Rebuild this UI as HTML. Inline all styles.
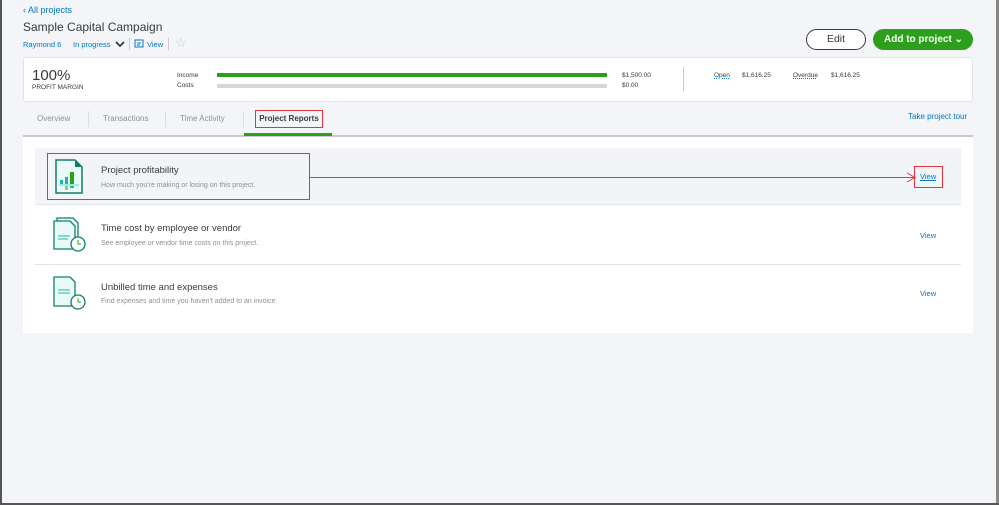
<!DOCTYPE html>
<html><head><style>
*{margin:0;padding:0;box-sizing:border-box}
body{width:999px;height:505px;background:#f4f5f8;font-family:"Liberation Sans",sans-serif;position:relative;overflow:hidden;color:#393a3d}
.a{position:absolute;white-space:nowrap}
.blue{color:#0077c5}
.g{color:#8d9096}
</style></head><body>
<div class="a" style="left:0;top:0;width:2px;height:505px;background:#555"></div>
<div class="a" style="right:0;top:0;width:3px;height:505px;background:#888"></div>
<div class="a" style="left:0;bottom:0;width:999px;height:2px;background:#555"></div>

<div class="a blue" style="left:23px;top:5px;font-size:9px">‹ All projects</div>
<div class="a" style="left:23px;top:20px;font-size:12px;color:#393a3d">Sample Capital Campaign</div>
<div class="a blue" style="left:23px;top:40px;font-size:7.5px">Raymond 6</div>
<div class="a blue" style="left:73px;top:40px;font-size:7.5px">In progress</div>
<svg class="a" style="left:114px;top:40px" width="12" height="9"><path d="M2 2 L6 6 L10 2" stroke="#393a3d" stroke-width="1.8" fill="none"/></svg>
<div class="a" style="left:129px;top:38px;width:1px;height:12px;background:#ccc"></div>
<svg class="a" style="left:134px;top:39px" width="10" height="10"><rect x="1" y="1" width="8" height="7" fill="none" stroke="#0077c5"/><path d="M3 4h4M3 6h3" stroke="#0077c5"/></svg>
<div class="a blue" style="left:147px;top:40px;font-size:7.5px">View</div>
<div class="a" style="left:168px;top:38px;width:1px;height:12px;background:#ccc"></div>
<div class="a" style="left:175px;top:35px;font-size:13px;color:#ccc">☆</div>

<div class="a" style="left:806px;top:29px;width:60px;height:21px;border:1.5px solid #393a3d;border-radius:11px;background:#fff;font-size:10.5px;text-align:center;line-height:18px">Edit</div>
<div class="a" style="left:873px;top:29px;width:100px;height:21px;border-radius:11px;background:#2ca01c;color:#fff;font-size:10px;font-weight:bold;line-height:21px;padding-left:11px">Add to project ⌄</div>

<div class="a" style="left:23px;top:57px;width:950px;height:45px;background:#fff;border:1px solid #e3e4e7;border-radius:3px"></div>
<div class="a" style="left:32px;top:67px;font-size:15px">100%</div>
<div class="a" style="left:32px;top:84px;font-size:6.5px">PROFIT MARGIN</div>
<div class="a" style="left:177px;top:72px;font-size:6.5px">Income</div>
<div class="a" style="left:177px;top:82px;font-size:6.5px">Costs</div>
<div class="a" style="left:217px;top:73px;width:390px;height:4px;background:#2ca01c"></div>
<div class="a" style="left:217px;top:84px;width:390px;height:4px;background:#d4d7dc"></div>
<div class="a" style="left:622px;top:72px;font-size:6.5px">$1,500.00</div>
<div class="a" style="left:622px;top:82px;font-size:6.5px">$0.00</div>
<div class="a" style="left:683px;top:67px;width:1px;height:24px;background:#ccc"></div>
<div class="a" style="left:714px;top:72px;font-size:6.5px;text-decoration:underline dotted #0077c5">Open</div>
<div class="a" style="left:742px;top:72px;font-size:6.5px">$1,616.25</div>
<div class="a" style="left:793px;top:72px;font-size:6.5px;text-decoration:underline dotted #0077c5">Overdue</div>
<div class="a" style="left:831px;top:72px;font-size:6.5px">$1,616.25</div>

<div class="a g" style="left:37px;top:114px;font-size:8px">Overview</div>
<div class="a" style="left:88px;top:111px;width:1px;height:16px;background:#ddd"></div>
<div class="a g" style="left:103px;top:114px;font-size:8px">Transactions</div>
<div class="a" style="left:165px;top:111px;width:1px;height:16px;background:#ddd"></div>
<div class="a g" style="left:180px;top:114px;font-size:8px">Time Activity</div>
<div class="a" style="left:243px;top:111px;width:1px;height:16px;background:#ddd"></div>
<div class="a" style="left:255px;top:110px;width:68px;height:18px;border:1px solid #e8323c;font-size:8px;font-weight:bold;line-height:16px;text-align:center">Project Reports</div>
<div class="a blue" style="left:908px;top:112px;font-size:8px">Take project tour</div>
<div class="a" style="left:23px;top:135px;width:950px;height:2px;background:#c9cbce"></div>
<div class="a" style="left:244px;top:133px;width:88px;height:3px;background:#2ca01c"></div>

<div class="a" style="left:23px;top:137px;width:950px;height:196px;background:#fff"></div>
<div class="a" style="left:35px;top:148px;width:926px;height:57px;background:#f3f4f7;border-bottom:1px solid #e3e4e7"></div>
<div class="a" style="left:35px;top:264px;width:926px;height:1px;background:#e3e4e7"></div>

<div class="a" style="left:47px;top:153px;width:263px;height:47px;border:1px solid #e8323c"></div>
<div class="a" style="left:310px;top:177px;width:605px;height:1px;background:#e8323c"></div>
<svg class="a" style="left:905px;top:172px" width="12" height="11"><path d="M2 1 L10 5.5 L2 10" stroke="#e8323c" fill="none"/></svg>
<div class="a" style="left:914px;top:166px;width:29px;height:22px;border:1px solid #e8323c"></div>
<div class="a blue" style="left:920px;top:172px;font-size:7.5px;text-decoration:underline">View</div>
<div class="a blue" style="left:920px;top:231px;font-size:7.5px">View</div>
<div class="a blue" style="left:920px;top:289px;font-size:7.5px">View</div>

<svg class="a" style="left:55px;top:159px" width="28" height="35"><path d="M1 1h19l7 7v26H1z" fill="#eafaf6" stroke="#0f7f6a" stroke-width="1.5"/><path d="M20 1v7h7" fill="#0f7f6a"/><rect x="5" y="21" width="3" height="4" fill="#25b5a8"/><rect x="10" y="18" width="3" height="7" fill="#25b5a8"/><rect x="15" y="13" width="4" height="12" fill="#2ca01c"/><rect x="4" y="25" width="20" height="2" fill="#9ed"/><rect x="10" y="27" width="3" height="4" fill="#8c8"/><rect x="15" y="27" width="4" height="2" fill="#25b5a8"/></svg>
<div class="a" style="left:101px;top:165px;font-size:9.5px">Project profitability</div>
<div class="a g" style="left:101px;top:182px;font-size:7px">How much you're making or losing on this project.</div>

<svg class="a" style="left:53px;top:217px" width="34" height="36"><path d="M4 1h16l5 5v22H4z" fill="#eafaf6" stroke="#0f7f6a" stroke-width="1.3"/><path d="M1 4h16l5 5v23H1z" fill="#eafaf6" stroke="#0f7f6a" stroke-width="1.3"/><path d="M5 19h12M5 22h10" stroke="#25b5a8"/><circle cx="25" cy="27" r="7" fill="#fff" stroke="#0f7f6a" stroke-width="1.3"/><path d="M25 23v4h3" stroke="#2ca01c" fill="none"/></svg>
<div class="a" style="left:101px;top:223px;font-size:9.5px">Time cost by employee or vendor</div>
<div class="a g" style="left:101px;top:240px;font-size:7px">See employee or vendor time costs on this project.</div>

<svg class="a" style="left:53px;top:276px" width="34" height="36"><path d="M1 1h16l5 5v24H1z" fill="#eafaf6" stroke="#0f7f6a" stroke-width="1.3"/><path d="M5 14h12M5 17h12" stroke="#25b5a8"/><circle cx="25" cy="26" r="7" fill="#fff" stroke="#0f7f6a" stroke-width="1.3"/><path d="M25 22v4h3" stroke="#2ca01c" fill="none"/></svg>
<div class="a" style="left:101px;top:282px;font-size:9.5px">Unbilled time and expenses</div>
<div class="a g" style="left:101px;top:298px;font-size:7px">Find expenses and time you haven't added to an invoice.</div>
</body></html>
